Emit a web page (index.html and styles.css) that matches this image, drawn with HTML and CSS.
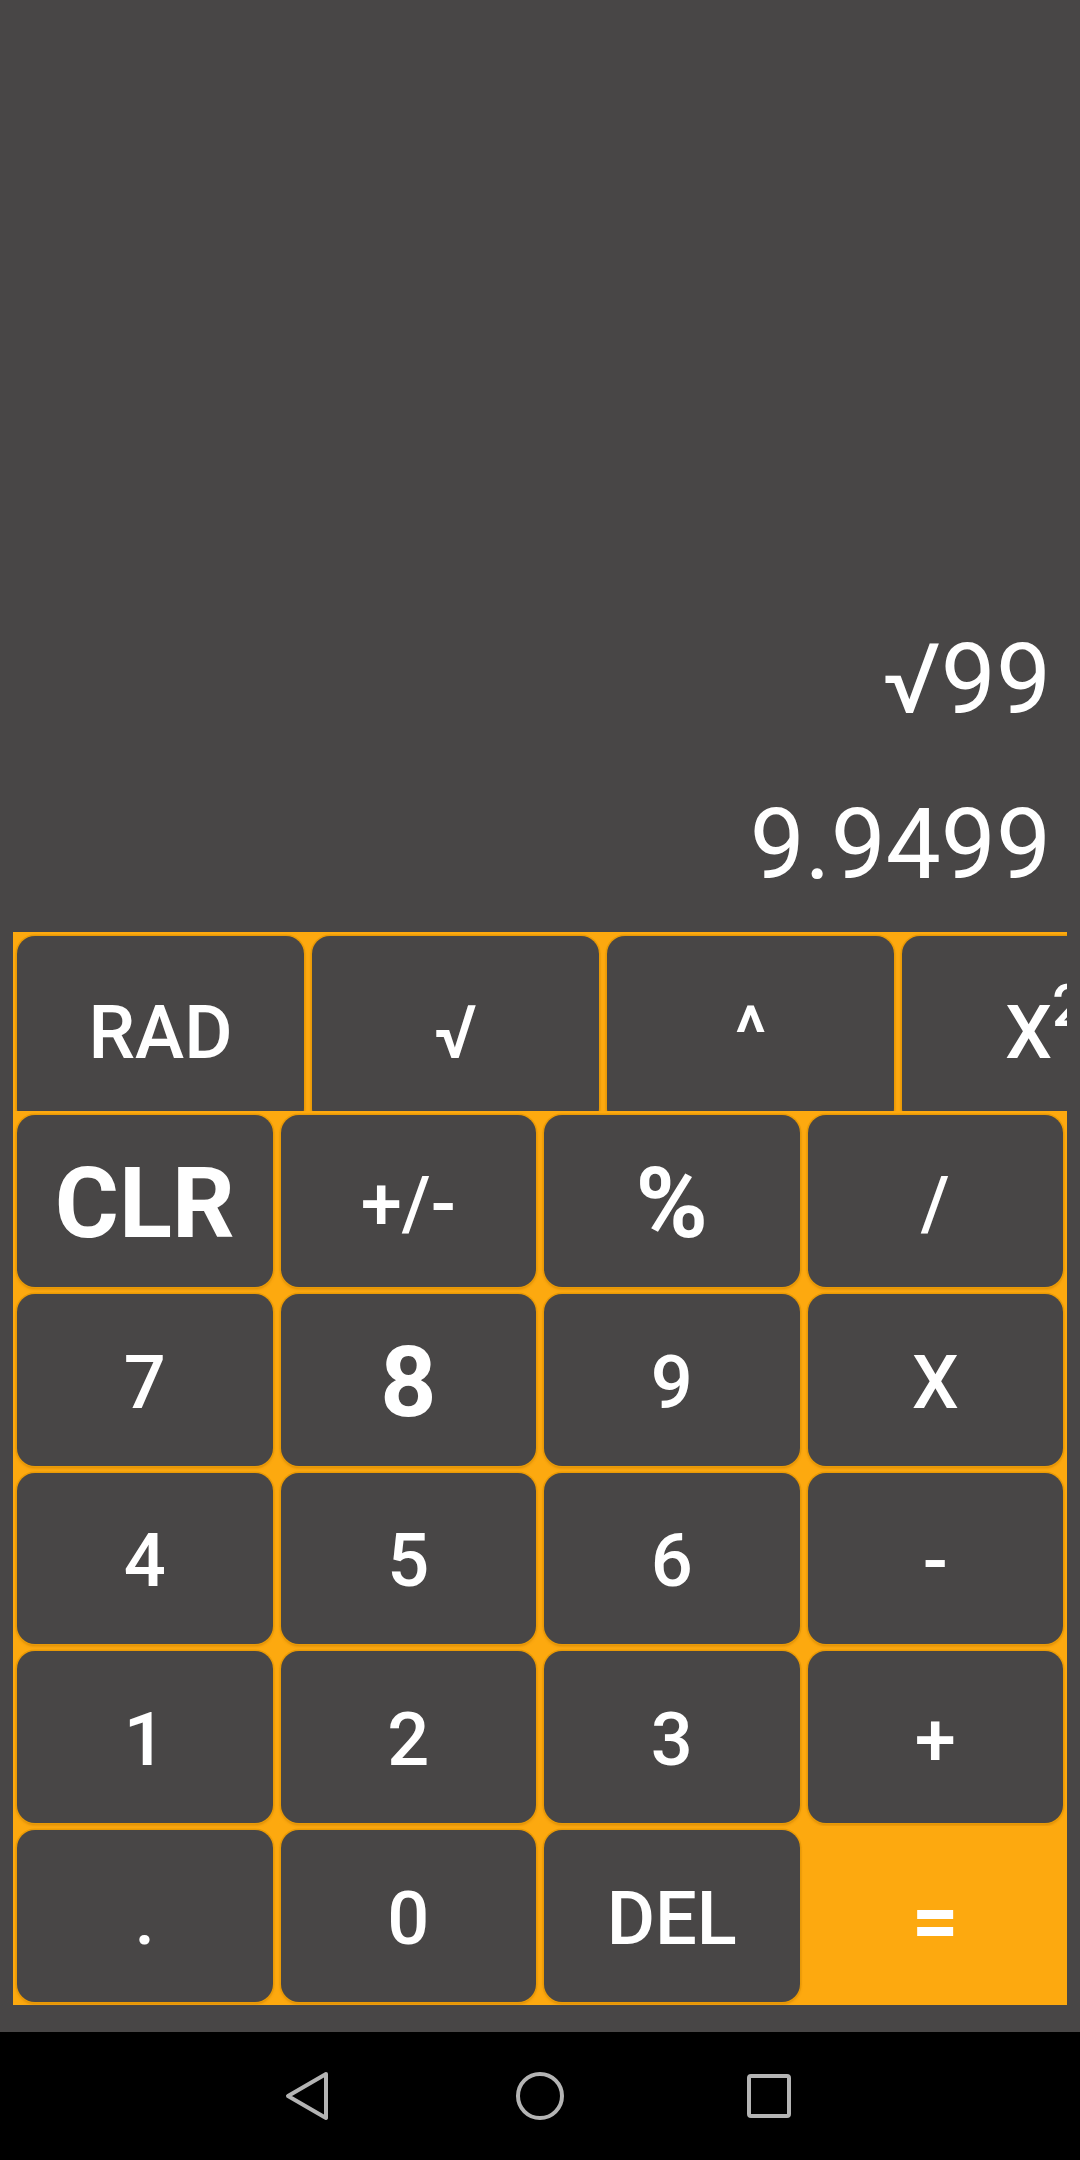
FILE: index.html
```html
<!DOCTYPE html>
<html>
<head>
<meta charset="utf-8">
<link rel="stylesheet" href="styles.css">
</head>
<body>
<div class="app">
  <div class="display">
    <div class="line">√99</div>
    <div class="line">9.9499</div>
  </div>
  <div class="keypad">
    <div class="sci-row">
      <div class="key sci"><span>RAD</span></div>
      <div class="key sci"><span>√</span></div>
      <div class="key sci"><span>^</span></div>
      <div class="key sci"><span>X<sup>2</sup></span></div>
    </div>
    <div class="grid">
      <div class="cell"><div class="key big"><span>CLR</span></div></div>
      <div class="cell"><div class="key"><span>+/-</span></div></div>
      <div class="cell"><div class="key big"><span>%</span></div></div>
      <div class="cell"><div class="key"><span>/</span></div></div>

      <div class="cell"><div class="key"><span>7</span></div></div>
      <div class="cell"><div class="key big"><span>8</span></div></div>
      <div class="cell"><div class="key"><span>9</span></div></div>
      <div class="cell"><div class="key"><span>X</span></div></div>

      <div class="cell"><div class="key"><span>4</span></div></div>
      <div class="cell"><div class="key"><span>5</span></div></div>
      <div class="cell"><div class="key"><span>6</span></div></div>
      <div class="cell"><div class="key"><span>-</span></div></div>

      <div class="cell"><div class="key"><span>1</span></div></div>
      <div class="cell"><div class="key"><span>2</span></div></div>
      <div class="cell"><div class="key"><span>3</span></div></div>
      <div class="cell"><div class="key"><span>+</span></div></div>

      <div class="cell"><div class="key"><span>.</span></div></div>
      <div class="cell"><div class="key"><span>0</span></div></div>
      <div class="cell"><div class="key"><span>DEL</span></div></div>
      <div class="cell equals"><div class="key eq"><span>=</span></div></div>
    </div>
  </div>
  <div class="spacer"></div>
  <div class="navbar">
    <svg class="nav-icon nav-back" width="48" height="52" viewBox="0 0 48 52">
      <path d="M42 4 L4 26 L42 48 Z" fill="none" stroke="#b4b4b4" stroke-width="4" stroke-linejoin="round"/>
    </svg>
    <svg class="nav-icon nav-home" width="52" height="52" viewBox="0 0 52 52">
      <circle cx="26" cy="26" r="22" fill="none" stroke="#b4b4b4" stroke-width="4"/>
    </svg>
    <svg class="nav-icon nav-recent" width="48" height="48" viewBox="0 0 48 48">
      <rect x="4" y="4" width="40" height="40" rx="2" fill="none" stroke="#b4b4b4" stroke-width="4"/>
    </svg>
  </div>
</div>
</body>
</html>
```

FILE: styles.css
```css
html, body {
  margin: 0;
  padding: 0;
}

body {
  width: 1080px;
  height: 2160px;
  background: #484646;
  font-family: Roboto, "Liberation Sans", sans-serif;
  color: #ffffff;
  overflow: hidden;
}

.app {
  display: flex;
  flex-direction: column;
  height: 2160px;
}

.display {
  height: 932px;
  display: flex;
  flex-direction: column;
  justify-content: flex-end;
  align-items: flex-end;
  padding: 0 29px 5px 0;
  box-sizing: border-box;
}

.line {
  font-size: 98px;
  font-weight: 400;
  line-height: 165px;
  white-space: nowrap;
}

.keypad {
  margin: 0 13px;
  height: 1073px;
  background: #fda90f;
  display: flex;
  flex-direction: column;
}

.sci-row {
  height: 179px;
  flex: none;
  display: flex;
  gap: 8px;
  padding: 4px 0 0 4px;
  box-sizing: border-box;
  overflow: hidden;
}

.key {
  background: #484646;
  border-radius: 18px;
  box-shadow: 0 0 0 1.5px #e99a06, 0 2px 3px rgba(160, 90, 0, 0.45);
  display: flex;
  align-items: center;
  justify-content: center;
  font-size: 74px;
  font-weight: 500;
  line-height: 1;
  box-sizing: border-box;
  padding-top: 6px;
  height: 100%;
  white-space: nowrap;
}

.key span {
  display: block;
  line-height: 1;
}

.key.sci {
  flex: none;
  width: 287px;
  height: 190px;
  align-items: flex-start;
  padding-top: 60px;
}

.key sup {
  font-size: 0.8em;
  vertical-align: baseline;
  position: relative;
  top: -32px;
  line-height: 0;
}

.grid {
  flex: 1;
  display: grid;
  grid-template-columns: repeat(4, 1fr);
  grid-template-rows: repeat(5, 1fr);
}

.cell {
  padding: 4px 4px 3px 4px;
  box-sizing: border-box;
  min-height: 0;
}

.key.big {
  font-size: 98px;
  font-weight: 700;
}

.cell.equals {
  padding: 0;
  box-shadow: inset 1px 1px 0 rgba(220, 140, 0, 0.6);
}

.key.eq {
  background: #fda90f;
  border-radius: 0;
  box-shadow: none;
  font-weight: 700;
  font-size: 82px;
  padding-top: 10px;
}

.spacer {
  flex: 1;
}

.navbar {
  height: 128px;
  flex: none;
  background: #000000;
  display: flex;
  align-items: center;
  justify-content: flex-start;
  padding-left: 284px;
  box-sizing: border-box;
}

.nav-icon {
  display: block;
  flex: none;
}

.nav-home {
  margin-left: 182px;
}

.nav-recent {
  margin-left: 179px;
}
```
